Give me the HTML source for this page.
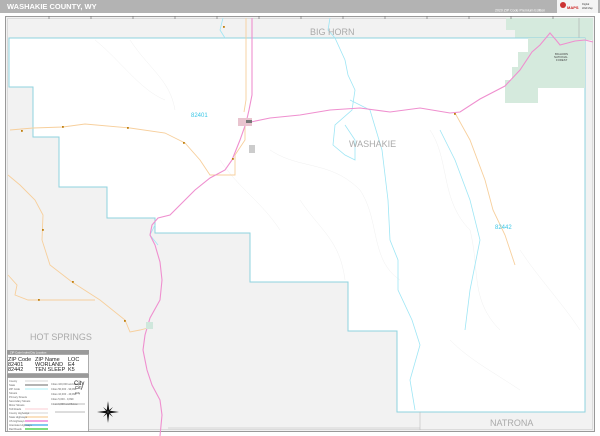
<!DOCTYPE html>
<html><head><meta charset="utf-8"><style>
html,body{margin:0;padding:0;width:600px;height:436px;overflow:hidden;background:#fff;font-family:"Liberation Sans",sans-serif}
</style></head><body>
<svg width="600" height="436" viewBox="0 0 600 436" xmlns="http://www.w3.org/2000/svg" font-family="Liberation Sans, sans-serif">
<rect x="0" y="0" width="600" height="436" fill="#fff"/>
<rect x="0" y="0" width="600" height="13" fill="#b3b3b3"/>
<text x="7" y="9" font-size="7.5" font-weight="bold" fill="#fff">WASHAKIE COUNTY, WY</text>
<text x="495" y="11.5" font-size="3.5" fill="#fff">2020 ZIP Code Premium Edition</text>
<rect x="557" y="0" width="41" height="13" fill="#f4f4f4"/>
<circle cx="563" cy="5" r="3" fill="#c33"/>
<text x="567" y="9" font-size="4" font-weight="bold" fill="#c22">MAPS</text>
<text x="582" y="5" font-size="2.6" fill="#444">Digital</text>
<text x="582" y="9" font-size="2.6" fill="#444">Wall Map</text>
<rect x="5.5" y="16.5" width="589" height="415" fill="#f2f2f2" stroke="#999" stroke-width="1"/>
<rect x="7.5" y="18.5" width="585" height="411" fill="#f2f2f2" stroke="#ccc" stroke-width="0.6"/>
<polygon points="506,18 593,18 593,40 585,40 585,88 538,88 538,103 505,103 505,80 512,80 512,67 518,67 518,52 528,52 528,38 515,38 515,30 506,30" fill="#d5eadd"/>
<line x1="579" y1="18" x2="579" y2="38" stroke="#aaa" stroke-width="0.6"/>
<polygon points="9,38 585,38 585,412 397,412 397,331 348,331 348,282 250,282 250,233 155,233 155,218 107,218 107,187 59,187 59,137 33,137 33,87 9,87" fill="#fff" stroke="#8fd3df" stroke-width="1"/>
<polygon points="505,80 512,80 512,67 518,67 518,52 528,52 528,38 585,38 585,88 538,88 538,103 505,103" fill="#d5eadd"/>
<line x1="420" y1="412" x2="420" y2="430" stroke="#bbb" stroke-width="0.6"/>
<line x1="168" y1="428" x2="420" y2="428" stroke="#bbb" stroke-width="0.6"/>
<g fill="none" stroke="#f0f0f0" stroke-width="0.5">
<path d="M95,40 C120,60 140,90 165,100"/><path d="M130,40 C150,70 170,80 175,110"/>
<path d="M270,150 C300,170 330,160 360,190 C380,220 370,260 400,280"/>
<path d="M430,130 C450,160 440,200 470,230 C480,270 470,300 500,330"/>
<path d="M520,250 C540,280 560,300 580,330"/><path d="M300,200 C320,230 340,240 345,280"/>
<path d="M450,340 C470,360 490,370 520,390"/><path d="M220,160 C240,190 260,200 280,230"/>
</g>
<g fill="none" stroke="#9ee6f5" stroke-width="0.8">
<path d="M330,18 L328,30 L335,38 L345,60 L348,75 L355,90 L352,110 L335,125 L333,145 L345,155 L355,160 L355,140 L345,125"/>
<path d="M350,100 L370,110 L382,150 L388,200 L390,240 L398,260 L398,290 L412,320 L420,345 L410,380 L415,410"/>
<path d="M440,130 L455,160 L470,200 L480,240 L470,290 L465,330"/>
<path d="M223,18 L220,30 L225,38"/>
<path d="M155,225 L150,235 L158,245"/>
</g>
<g fill="none" stroke="#f7cf9c" stroke-width="0.9">
<path d="M246,18 L246,100 L244,112"/>
<path d="M10,130 L33,128 L63,127 L85,124 L130,128 L165,133 L185,143 L200,160 L210,175 L235,175 L235,155 L245,140 L245,125"/>
<path d="M455,113 L470,140 L485,180 L493,210 L505,235 L515,265"/>
<path d="M8,175 L20,185 L35,200 L43,215 L42,240 L50,265 L72,282 L100,300 L125,320 L130,332 L140,330 L148,328"/>
<path d="M8,275 L17,285 L15,295 L28,300 L95,300"/>
</g>
<g fill="none" stroke="#ef8fcf" stroke-width="1.1">
<path d="M252,18 L252,95 L249,110 L246,123 L240,140 L232,160 L225,170 L210,178 L195,190 L178,207 L170,215 L158,218 L152,225 L150,235 L155,245 L160,262 L162,280 L160,300 L150,318 L145,335 L143,350 L147,370 L152,385 L160,400 L162,415 L160,436"/>
<path d="M246,123 L270,118 L300,115 L330,110 L360,108 L390,112 L420,108 L450,113 L460,112 L480,99 L505,86 L520,70 L532,52 L540,45 L550,33 L556,40 L560,45 L575,41 L585,40 L593,42"/>
</g>
<rect x="238" y="118" width="14" height="8" fill="#e9c4cf"/>
<rect x="246" y="120" width="6" height="3" fill="#777"/>
<rect x="249" y="145" width="6" height="8" fill="#ccc"/>
<rect x="146" y="322" width="7" height="7" fill="#cfe7dc"/>
<g fill="#c08010">
<rect x="21" y="130" width="1.8" height="1.8"/><rect x="62" y="126" width="1.8" height="1.8"/><rect x="127" y="127" width="1.8" height="1.8"/><rect x="183" y="142" width="1.8" height="1.8"/><rect x="232" y="158" width="1.8" height="1.8"/><rect x="42" y="229" width="1.8" height="1.8"/><rect x="72" y="281" width="1.8" height="1.8"/><rect x="124" y="320" width="1.8" height="1.8"/><rect x="38" y="299" width="1.8" height="1.8"/><rect x="454" y="113" width="1.8" height="1.8"/><rect x="223" y="26" width="1.8" height="1.8"/>
</g>
<text x="310" y="35" font-size="9" fill="#aaa">BIG HORN</text>
<text x="349" y="147" font-size="9" fill="#aaa">WASHAKIE</text>
<text x="30" y="340" font-size="9" fill="#aaa">HOT SPRINGS</text>
<text x="490" y="426" font-size="9" fill="#aaa">NATRONA</text>
<text x="191" y="117" font-size="6" fill="#39c6e6">82401</text>
<text x="495" y="229" font-size="6" fill="#39c6e6">82442</text>
<text x="555" y="55" font-size="2.8" fill="#444">BIGHORN</text>
<text x="554" y="58" font-size="2.8" fill="#444">NATIONAL</text>
<text x="556" y="61" font-size="2.8" fill="#444">FOREST</text>
<rect x="7" y="350" width="82" height="4" fill="#999"/>
<text x="10" y="353.3" font-size="2.8" fill="#fff">ZIP Code Index/City Location</text>
<rect x="7.5" y="354.5" width="81" height="19" fill="#fff" stroke="#999" stroke-width="0.8"/>
<g font-size="5.5" fill="#222">
<text x="8" y="361">ZIP Code</text><text x="35" y="361">ZIP Name</text><text x="68" y="361">LOC</text>
<text x="8" y="366">82401</text><text x="35" y="366">WORLAND</text><text x="68" y="366">E4</text>
<text x="8" y="371">82442</text><text x="35" y="371">TEN SLEEP</text><text x="68" y="371">K5</text>
</g>
<rect x="7" y="374" width="82" height="3.5" fill="#999"/>
<rect x="7.5" y="377.5" width="81" height="54" fill="#fff" stroke="#999" stroke-width="0.8"/>
<g stroke-width="1.2">
<line x1="25" y1="381" x2="48" y2="381" stroke="#ddd"/><line x1="25" y1="385" x2="48" y2="385" stroke="#888"/><line x1="25" y1="389" x2="48" y2="389" stroke="#bdf3fb"/>
<line x1="25" y1="409" x2="48" y2="409" stroke="#fcd6dc"/><line x1="25" y1="413" x2="48" y2="413" stroke="#ddd"/><line x1="25" y1="417" x2="48" y2="417" stroke="#f7cf9c"/><line x1="25" y1="421" x2="48" y2="421" stroke="#ef6fcf"/><line x1="25" y1="425" x2="48" y2="425" stroke="#39a6e6"/><line x1="25" y1="429" x2="48" y2="429" stroke="#33cc33"/>
</g>
<g font-size="2.6" fill="#666">
<text x="9" y="382">County</text><text x="9" y="386">State</text><text x="9" y="390">ZIP Code</text><text x="9" y="394">Streets</text><text x="9" y="398">Primary Streets</text><text x="9" y="402">Secondary Streets</text><text x="9" y="406">Minor Streets</text><text x="9" y="410">Toll Roads</text><text x="9" y="414">County Highways</text><text x="9" y="418">State Highways</text><text x="9" y="422">US Highways</text><text x="9" y="426">Interstate Highways</text><text x="9" y="430">Rail Roads</text>
<text x="51" y="385">Cities 100,000 and Above</text><text x="51" y="390">Cities 50,000 - 99,999</text><text x="51" y="395">Cities 10,000 - 49,999</text><text x="51" y="400">Cities 5,000 - 9,999</text><text x="51" y="405">Cities 1,000 and Below</text>
</g>
<text x="74" y="385" font-size="6" fill="#222">City</text><text x="75" y="389" font-size="4.5" fill="#222">City</text>
<text x="75" y="394" font-size="3" fill="#222">City</text>
<g stroke="#777" stroke-width="0.5" fill="none"><path d="M55,404 L85,404"/><path d="M55,412 L85,412"/></g>
<g transform="translate(108,412)" fill="#111">
<polygon points="0,-11 1.2,-2 0,0 -1.2,-2"/><polygon points="0,11 1.2,2 0,0 -1.2,2"/>
<polygon points="-11,0 -2,1.2 0,0 -2,-1.2"/><polygon points="11,0 2,1.2 0,0 2,-1.2"/>
<polygon points="-5,-5 0,-1 -1,0"/><polygon points="5,5 0,1 1,0"/><polygon points="5,-5 1,0 0,-1"/><polygon points="-5,5 -1,0 0,1"/>
</g>
<g stroke="#666" stroke-width="0.6">
<line x1="49" y1="16" x2="49" y2="19"/><line x1="91" y1="16" x2="91" y2="19"/><line x1="133" y1="16" x2="133" y2="19"/><line x1="175" y1="16" x2="175" y2="19"/><line x1="217" y1="16" x2="217" y2="19"/><line x1="259" y1="16" x2="259" y2="19"/><line x1="301" y1="16" x2="301" y2="19"/><line x1="343" y1="16" x2="343" y2="19"/><line x1="385" y1="16" x2="385" y2="19"/><line x1="427" y1="16" x2="427" y2="19"/><line x1="469" y1="16" x2="469" y2="19"/><line x1="511" y1="16" x2="511" y2="19"/><line x1="553" y1="16" x2="553" y2="19"/>
</g>
</svg>
</body></html>
